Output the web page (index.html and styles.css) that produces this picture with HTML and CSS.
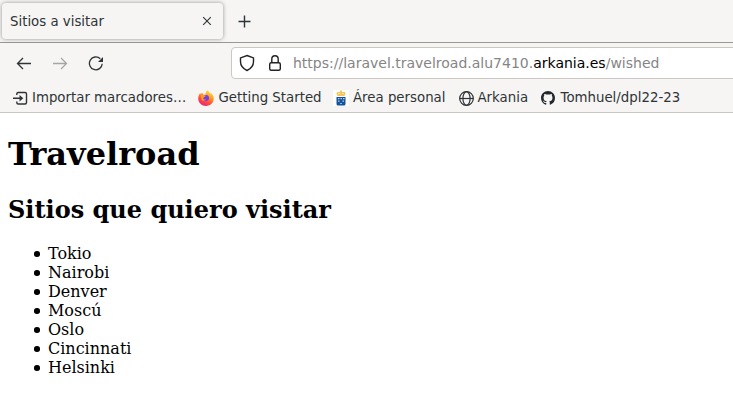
FILE: index.html
```html
<!DOCTYPE html>
<html lang="es">
<head>
<meta charset="utf-8">
<title>Sitios a visitar</title>
<link rel="stylesheet" href="styles.css">
</head>
<body>
<header class="chrome">
  <div class="tabs">
    <div class="tab"><span>Sitios a visitar</span>
      <svg class="close" width="10" height="10" viewBox="0 0 10 10"><path d="M1.2 1.2l7.6 7.6M8.8 1.2L1.2 8.8"/></svg>
    </div>
    <svg class="plus" width="14" height="14" viewBox="0 0 14 14"><path d="M6.500 1.500v12M.5 7.500h12"/></svg>
  </div>
  <nav class="toolbar">
    <svg class="nav-icon" width="16" height="16" viewBox="0 0 16 16"><path d="M15 8.500H1.500M7 3L1.500 8.500 7 14"/></svg>
    <svg class="nav-icon disabled" width="16" height="16" viewBox="0 0 16 16"><path d="M1 8.500h13.500M9 3l5.500 5.500L9 14"/></svg>
    <svg class="nav-icon" width="16" height="16" viewBox="0 0 16 16"><path d="M12.300 3.800A6.400 6.400 0 1 0 14.200 8.700"/><path class="solid" d="M15 2v5H10z"/></svg>
    <div class="urlbar">
      <svg class="shield" width="16" height="18" viewBox="0 0 16 18"><path d="M8 1.500l6.500 2.400v3.600c0 4-2.400 7.100-6.500 9-4.100-1.900-6.500-5-6.500-9V3.900z"/></svg>
      <svg class="lock" width="14" height="18" viewBox="0 0 14 18"><rect x="1.700" y="8.700" width="10.600" height="7.600" rx="1.500"/><path d="M3.800 8.500V5a3.200 3.200 0 0 1 6.400 0v3.500"/></svg>
      <span class="url">https://laravel.travelroad.alu7410.<b>arkania.es</b>/wished</span>
    </div>
  </nav>
  <div class="bookmarks">
    <a class="bm import"><svg class="line" width="16" height="16" viewBox="0 0 16 16"><path d="M4.800 5V4q0-1.500 1.500-1.500h6.700q1.500 0 1.500 1.500v8.500q0 1.500-1.500 1.500H6.300q-1.500 0-1.500-1.500V11.500M1 8.300h8"/><path class="solid" d="M7.500 5.100l3.800 3.200-3.800 3.200z"/></svg><span>Importar marcadores…</span></a>
    <a class="bm firefox"><svg width="16" height="16" viewBox="0 0 16 16">
      <defs><linearGradient id="flame" x1=".8" y1="0" x2=".3" y2="1"><stop offset="0" stop-color="#fff04a"/><stop offset=".4" stop-color="#ff9a26"/><stop offset=".7" stop-color="#ff4a3d"/><stop offset="1" stop-color="#e9217f"/></linearGradient></defs>
      <path fill="url(#flame)" d="M10 0c.3 1.800 1.600 2.600 2.600 3.700l.2-.9C14.600 4.300 15.800 6.400 15.800 8.600 15.800 12.700 12.300 16 8 16S.2 12.800.2 8.500C.2 6.300 1 4.300 2.300 3l.5 1.500L4 2.600l1.200 2 2.200.1C7.400 2.500 8.700.8 10 0z"/>
      <circle cx="8" cy="8" r="3" fill="#7440df"/><path fill="#ff9b2c" d="M2.800 5.200c2-.9 3.200.3 5 .6-.5 1.400-2 .9-2.500 2.200-.2 1.400 1.300 2 2.500 1.300-.6 1.800-3.300 2-4.300.3z"/></svg><span>Getting Started</span></a>
    <a class="bm area"><svg width="16" height="16" viewBox="0 0 16 16"><path fill="#fff" d="M0 0h16v16H0z"/><path fill="#f6c85b" d="M4.200 2h2.600l.4-1.500h1.600L9.200 2h2.600l.8 1.700-1.100 2.300h-7L3.400 3.700z"/><path fill="#fff" d="M5.200 3.200h1.500v.8H5.200zM9.200 3.200h1.500v.8H9.200z"/><path fill="#15549d" d="M3.500 7h9v7q0 1.500-1.500 1.500H5q-1.500 0-1.500-1.500z"/><path fill="#b7cee5" d="M5 8h1.500v1.200H5zM7.500 8H9v1.200H7.500zM10 8h1.500v1.200H10zM5 10.600h1.500v1.100H5zM9.500 10.600H11v1.100H9.500zM7.200 13h1.600v1H7.200z"/></svg><span>Área personal</span></a>
    <a class="bm arkania"><svg class="globe" width="16" height="16" viewBox="0 0 16 16"><circle cx="7.500" cy="8.500" r="6.800"/><ellipse cx="7.500" cy="8.500" rx="3.600" ry="6.800"/><path d="M.5 8.500h14"/></svg><span>Arkania</span></a>
    <a class="bm github"><svg width="14" height="14" viewBox="0 0 16 16"><path fill="#24292f" d="M8 0C3.580 0 0 3.580 0 8c0 3.540 2.290 6.530 5.470 7.590.4.070.55-.17.55-.38 0-.19-.01-.82-.01-1.490-2.010.37-2.530-.49-2.690-.94-.09-.23-.48-.94-.82-1.130-.28-.15-.68-.52-.01-.53.63-.01 1.080.58 1.230.82.720 1.210 1.870.87 2.330.66.070-.52.280-.87.510-1.070-1.780-.2-3.640-.89-3.640-3.950 0-.87.310-1.590.82-2.150-.08-.2-.36-1.020.08-2.120 0 0 .67-.21 2.200.82.640-.18 1.320-.27 2-.27s1.360.09 2 .27c1.530-1.040 2.200-.82 2.200-.82.440 1.100.160 1.920.080 2.120.510.560.820 1.270.820 2.150 0 3.070-1.870 3.750-3.650 3.950.290.250.540.730.540 1.480 0 1.070-.01 1.930-.01 2.200 0 .21.150.46.550.38A8.010 8.010 0 0 0 16 8c0-4.420-3.580-8-8-8z"/></svg><span>Tomhuel/dpl22-23</span></a>
  </div>
</header>
<main class="page">
  <h1>Travelroad</h1>
  <h2>Sitios que quiero visitar</h2>
  <ul><li>Tokio</li><li>Nairobi</li><li>Denver</li><li>Moscú</li><li>Oslo</li><li>Cincinnati</li><li>Helsinki</li></ul>
</main>
</body>
</html>
```
FILE: styles.css
```css
* { box-sizing: border-box; }
body { margin: 0; background: #fff; overflow: hidden; }
svg { display: block; flex: none; fill: none; }
.chrome {
  height: 113px;
  background: #f6f5f4;
  border-bottom: 1px solid #cdc7c2;
  font: 13.333px "DejaVu Sans", sans-serif;
  color: #2e3436;
}
.tabs {
  height: 43px;
  display: flex;
  align-items: center;
  padding-left: 2px;
  border-bottom: 1px solid #999896;
}
.tab {
  width: 221px;
  height: 36px;
  padding: 0 11px 0 8px;
  display: flex;
  align-items: center;
  justify-content: space-between;
  border-radius: 4px;
  background: #f6f5f4;
  box-shadow: 0 0 4px rgba(0, 0, 0, .4);
}
.close { stroke: #2e3436; stroke-width: 1.1; }
.plus { margin-left: 15px; stroke: #2e3436; stroke-width: 1.4; }
.toolbar {
  height: 40px;
  display: flex;
  align-items: center;
  padding-left: 16px;
}
.nav-icon { margin-right: 20px; stroke: #2e3436; stroke-width: 1.3; }
.disabled { opacity: .4; }
.solid { fill: #2e3436; stroke: none; }
.urlbar {
  flex: none;
  width: 520px;
  height: 32px;
  margin-left: 107px;
  padding-left: 7px;
  display: flex;
  align-items: center;
  border: 1px solid #cdc7c2;
  border-radius: 4px;
  background: #fff;
}
.shield, .lock { stroke: #222; stroke-width: 1.4; }
.lock { margin-left: 13px; }
.url { margin-left: 11px; font-size: 14px; color: #858585; white-space: nowrap; }
.url b { font-weight: normal; color: #000; }
.bookmarks { height: 29px; display: flex; align-items: center; padding-left: 12px; }
.bm { display: flex; align-items: center; gap: 4px; white-space: nowrap; flex: none; }
.import { width: 186px; }
.firefox { width: 135px; gap: 4.5px; }
.area { width: 125.5px; gap: 4px; }
.arkania { width: 82.5px; gap: 3px; }
.github { gap: 5.5px; }
.line { stroke: #2e3436; stroke-width: 1.4; }
.globe { stroke: #2e3436; stroke-width: 1.2; }
.page { padding: 0 8px; font: 16px "DejaVu Serif", serif; color: #000; display: flow-root; }
h1 { margin: 22px 0; font-size: 32px; line-height: 38px; }
h2 { margin: 23px 0 20px; font-size: 24px; line-height: 28px; }
ul { margin: 20px 0; padding: 0; list-style: none; }
li { height: 19px; line-height: 19px; display: flex; align-items: center; }
li::before {
  content: "";
  width: 5.6px;
  height: 5.6px;
  margin: 1px 8px 0 26.4px;
  border-radius: 50%;
  background: #000;
}
```
